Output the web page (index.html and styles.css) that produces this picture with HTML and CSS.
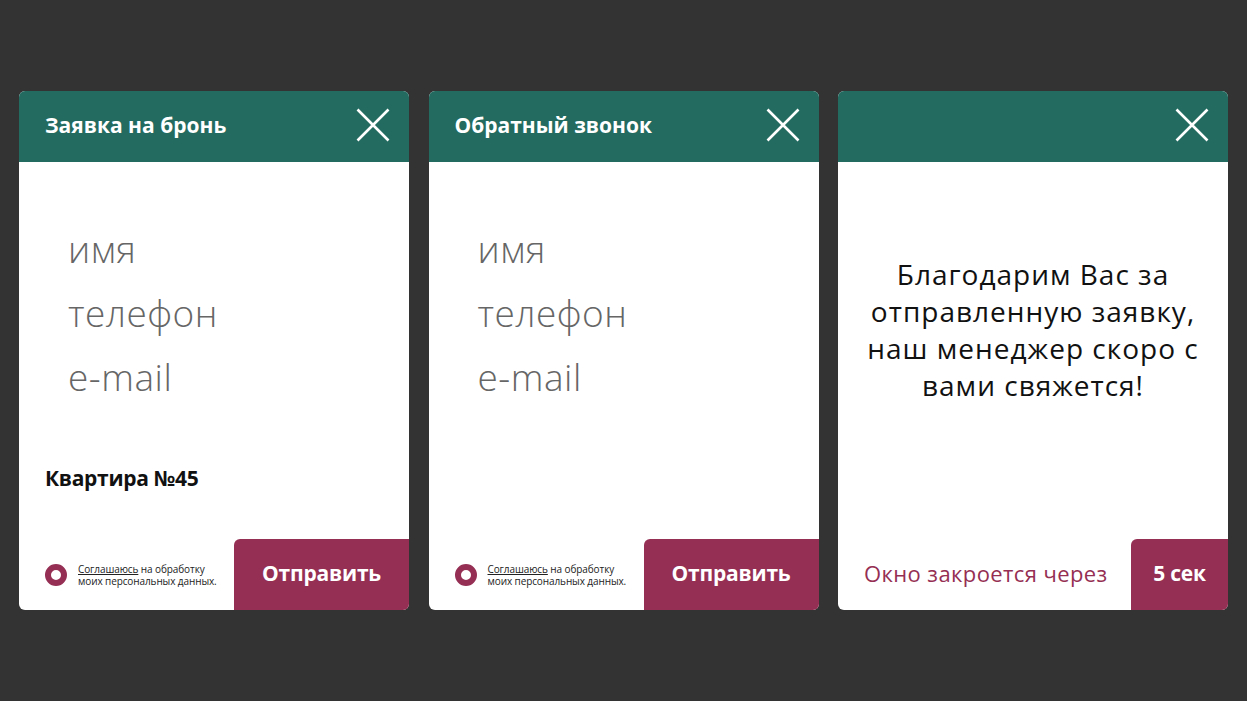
FILE: index.html
```html
<!DOCTYPE html>
<html lang="ru">
<head>
<meta charset="utf-8">
<link rel="stylesheet" href="styles.css">
</head>
<body>
<main class="stage">
  <section class="card">
    <header class="card-head">
      <h2 class="card-title">Заявка на бронь</h2>
      <svg class="close" viewBox="0 0 34 34" width="34" height="34"><path d="M1.5 1.5L32.5 32.5M32.5 1.5L1.5 32.5" stroke="#fff" stroke-width="2.6" fill="none"/></svg>
    </header>
    <div class="card-body">
      <div class="fields">
        <div class="field">имя</div>
        <div class="field">телефон</div>
        <div class="field">e-mail</div>
      </div>
      <div class="apt">Квартира №45</div>
      <footer class="card-foot">
        <label class="agree">
          <span class="radio"></span>
          <span class="agree-text"><u>Соглашаюсь</u> на обработку<br>моих персональных данных.</span>
        </label>
        <button class="btn">Отправить</button>
      </footer>
    </div>
  </section>

  <section class="card">
    <header class="card-head">
      <h2 class="card-title">Обратный звонок</h2>
      <svg class="close" viewBox="0 0 34 34" width="34" height="34"><path d="M1.5 1.5L32.5 32.5M32.5 1.5L1.5 32.5" stroke="#fff" stroke-width="2.6" fill="none"/></svg>
    </header>
    <div class="card-body">
      <div class="fields">
        <div class="field">имя</div>
        <div class="field">телефон</div>
        <div class="field">e-mail</div>
      </div>
      <footer class="card-foot">
        <label class="agree">
          <span class="radio"></span>
          <span class="agree-text"><u>Соглашаюсь</u> на обработку<br>моих персональных данных.</span>
        </label>
        <button class="btn">Отправить</button>
      </footer>
    </div>
  </section>

  <section class="card">
    <header class="card-head">
      <h2 class="card-title"></h2>
      <svg class="close" viewBox="0 0 34 34" width="34" height="34"><path d="M1.5 1.5L32.5 32.5M32.5 1.5L1.5 32.5" stroke="#fff" stroke-width="2.6" fill="none"/></svg>
    </header>
    <div class="card-body">
      <p class="thanks">Благодарим Вас за<br>отправленную заявку,<br>наш менеджер скоро с<br>вами свяжется!</p>
      <footer class="card-foot">
        <span class="timer-text">Окно закроется через</span>
        <span class="btn btn-timer">5 сек</span>
      </footer>
    </div>
  </section>
</main>
</body>
</html>
```

FILE: styles.css
```css
* { box-sizing: border-box; }
html, body { margin: 0; padding: 0; }
body {
  background: #333333;
  width: 1247px;
  height: 701px;
  overflow: hidden;
  font-family: "Open Sans", "Noto Sans", sans-serif;
}
.stage {
  display: flex;
  gap: 19.5px;
  padding: 91px 0 0 19px;
}
.card {
  width: 390px;
  height: 519px;
  background: #fff;
  border-radius: 6px;
  overflow: hidden;
  display: flex;
  flex-direction: column;
}
.card-head {
  height: 71px;
  background: #236b60;
  display: flex;
  align-items: center;
  justify-content: space-between;
  padding: 0 19px 3px 26px;
  flex-shrink: 0;
}
.card-title {
  margin: 0;
  color: #fff;
  font-size: 21px;
  font-weight: 700;
  letter-spacing: 0;
}
.close { display: block; }
.card-body {
  flex: 1;
  display: flex;
  flex-direction: column;
}
.fields {
  padding: 55px 0 0 49px;
}
.field {
  height: 64px;
  line-height: 64px;
  font-size: 37px;
  font-weight: 300;
  color: #666;
  letter-spacing: 0.5px;
}
.apt {
  margin: 54px 0 0 26px;
  font-size: 21px;
  line-height: 30px;
  font-weight: 700;
  color: #111;
  letter-spacing: -0.3px;
}
.card-foot {
  margin-top: auto;
  height: 71px;
  display: flex;
  align-items: stretch;
  justify-content: space-between;
}
.agree {
  display: flex;
  align-items: center;
  gap: 11px;
  padding-left: 26px;
}
.radio {
  width: 22px;
  height: 22px;
  border-radius: 50%;
  border: 6px solid #952f53;
  flex-shrink: 0;
}
.agree-text {
  font-size: 10px;
  line-height: 12px;
  color: #222;
  letter-spacing: -0.1px;
}
.btn {
  width: 175px;
  border: 0;
  margin: 0;
  padding: 0 0 4px;
  background: #952f53;
  color: #fff;
  font-family: inherit;
  font-size: 21px;
  font-weight: 700;
  border-top-left-radius: 6px;
  display: flex;
  align-items: center;
  justify-content: center;
  letter-spacing: -0.2px;
}
.thanks {
  margin: 94px 0 0;
  text-align: center;
  font-size: 28px;
  line-height: 37px;
  color: #111;
  letter-spacing: 1px;
}
.timer-text {
  align-self: center;
  padding: 0 0 4px 26px;
  font-size: 22px;
  color: #952f53;
  letter-spacing: 0.4px;
}
.btn-timer {
  width: 97px;
}
```
